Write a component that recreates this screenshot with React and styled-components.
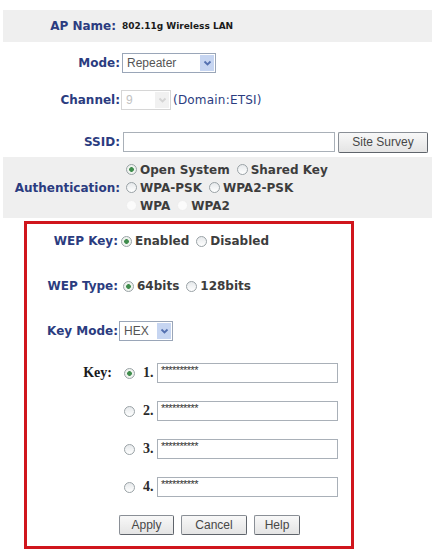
import React from "react";
import styled, { createGlobalStyle } from "styled-components";

const navy = "#2b3c80";

const Global = createGlobalStyle`
  body {
    margin: 0;
    background: #ffffff;
    font-family: "DejaVu Sans", Verdana, sans-serif;
  }
`;

const Page = styled.div`
  width: 432px;
  padding: 10px 0 0 3px;
  box-sizing: border-box;
`;

const Band = styled.div`
  background: #efefef;
  display: flex;
  align-items: center;
  height: ${(p) => p.$h}px;
  margin-top: ${(p) => p.$mt || 0}px;
`;

const Row = styled.div`
  display: flex;
  align-items: center;
  height: ${(p) => p.$h || 26}px;
  margin-top: ${(p) => p.$mt || 0}px;
`;

const Label = styled.div`
  width: ${(p) => p.$w}px;
  flex: none;
  box-sizing: border-box;
  text-align: right;
  padding-right: ${(p) => p.$pr || 0}px;
  color: ${navy};
  font-weight: bold;
  font-size: 12px;
  white-space: nowrap;
`;

const SerifLabel = styled(Label)`
  color: #1a1a1a;
  font-family: "Liberation Serif", "Times New Roman", serif;
  font-size: 14px;
`;

const Value = styled.span`
  font-size: 9px;
  font-weight: bold;
  color: #1a1a1a;
  margin-left: 2px;
`;

const Field = styled.div`
  margin-left: ${(p) => p.$ml || 0}px;
  display: flex;
  align-items: center;
`;

const SelectBox = styled.div`
  width: ${(p) => p.$w}px;
  height: ${(p) => p.$h || 20}px;
  box-sizing: border-box;
  border: 1px solid ${(p) => (p.$disabled ? "#d6d6d6" : "#9aa6b8")};
  background: #fff;
  display: flex;
  align-items: center;
  font-family: "Liberation Sans", Arial, sans-serif;
  font-size: 12px;
  color: ${(p) => (p.$disabled ? "#c2c2c2" : "#555555")};
`;

const SelectText = styled.span`
  flex: 1;
  padding-left: 4px;
`;

const Arrow = styled.span`
  width: 16px;
  height: 100%;
  box-sizing: border-box;
  border: 1px solid #fff;
  background: ${(p) => (p.$disabled ? "#f1f1f1" : "#c6d5f1")};
  display: flex;
  align-items: center;
  justify-content: center;
`;

const Note = styled.span`
  color: ${navy};
  font-size: 12px;
  margin-left: 2px;
  letter-spacing: 0.2px;
`;

const TextInput = styled.div`
  width: ${(p) => p.$w}px;
  height: 20px;
  box-sizing: border-box;
  border: 1px solid #a9b0b8;
  background: #fff;
  margin-left: ${(p) => p.$ml || 0}px;
  font-family: "Liberation Sans", Arial, sans-serif;
  font-size: 11px;
  line-height: 13px;
  padding-left: 3px;
  color: #333;
  letter-spacing: -0.6px;
  overflow: hidden;
`;

const Button = styled.button`
  width: ${(p) => p.$w}px;
  height: ${(p) => p.$h || 20}px;
  margin-left: ${(p) => p.$ml || 0}px;
  padding: 0;
  border: 1px solid #8a8f96;
  border-right-color: #5f646b;
  border-bottom-color: #5f646b;
  border-radius: 2px;
  background: linear-gradient(#f8f8f8, #e4e4e4);
  font-family: "Liberation Sans", Arial, sans-serif;
  font-size: 12px;
  color: #474747;
`;

const Options = styled.div`
  display: flex;
  flex-direction: column;
  margin-left: 3px;
`;

const OptLine = styled.div`
  display: flex;
  align-items: center;
  height: 18px;
`;

const Opt = styled.span`
  display: inline-flex;
  align-items: center;
  font-weight: bold;
  font-size: 12px;
  color: #3d3d3d;
  margin-right: 4px;
  white-space: nowrap;
`;

const Radio = styled.span`
  display: inline-block;
  box-sizing: border-box;
  width: 11px;
  height: 11px;
  border-radius: 50%;
  flex: none;
  margin: 0 3px 0 ${(p) => (p.$ml != null ? p.$ml : 3)}px;
  border: 1px solid ${(p) => (p.$disabled ? "#eeeeee" : "#9aa2a6")};
  background: ${(p) =>
    p.$checked
      ? "radial-gradient(circle, #3f8c4c 0 2px, #eef3ee 2.7px)"
      : p.$disabled
      ? "#fbfbfb"
      : "linear-gradient(#e6e9eb, #ffffff)"};
`;

const Digit = styled.span`
  font-family: "Liberation Serif", "Times New Roman", serif;
  font-weight: bold;
  font-size: 14px;
  color: #2a2a2a;
  margin-left: 5px;
  width: 12px;
`;

const RedBox = styled.div`
  width: 330px;
  margin: 3px 0 0 21px;
  box-sizing: border-box;
  border: 3px solid #d0161d;
  padding: 4px 0 8px 0;
`;

const Chevron = ({ color }) => (
  <svg width="9" height="7" viewBox="0 0 9 7">
    <path d="M1.5 1.5 L4.5 4.5 L7.5 1.5" fill="none" stroke={color} strokeWidth="1.8" />
  </svg>
);

const Select = ({ w, text, disabled }) => (
  <SelectBox $w={w} $disabled={disabled}>
    <SelectText>{text}</SelectText>
    <Arrow $disabled={disabled}>
      <Chevron color={disabled ? "#d4d4d4" : "#5470b0"} />
    </Arrow>
  </SelectBox>
);

const Option = ({ checked, disabled, children, ml }) => (
  <Opt>
    <Radio $checked={checked} $disabled={disabled} $ml={ml} />
    {children}
  </Opt>
);

const stars = "**********";

const KeyRow = ({ n, mt, checked, first }) => (
  <Row $mt={mt}>
    <SerifLabel $w={91} $pr={6}>{first ? "Key:" : ""}</SerifLabel>
    <Radio $checked={checked} $ml={6} />
    <Digit>{n}.</Digit>
    <TextInput $w={181} $ml={2}>{stars}</TextInput>
  </Row>
);

export default function App() {
  return (
    <Page>
      <Global />
      <Band $h={32}>
        <Label $w={117} $pr={4}>AP Name:</Label>
        <Value>802.11g Wireless LAN</Value>
      </Band>

      <Row $mt={8}>
        <Label $w={117}>Mode:</Label>
        <Field $ml={2}>
          <Select w={94} text="Repeater" />
        </Field>
      </Row>

      <Row $mt={11}>
        <Label $w={117}>Channel:</Label>
        <Field $ml={1}>
          <Select w={50} text="9" disabled />
          <Note>(Domain:ETSI)</Note>
        </Field>
      </Row>

      <Row $mt={16}>
        <Label $w={117}>SSID:</Label>
        <TextInput $w={212} $ml={3} />
        <Button $w={90} $h={21} $ml={3}>Site Survey</Button>
      </Row>

      <Band $h={61} $mt={2}>
        <Label $w={117}>Authentication:</Label>
        <Options>
          <OptLine>
            <Option checked>Open System</Option>
            <Option>Shared Key</Option>
          </OptLine>
          <OptLine>
            <Option>WPA-PSK</Option>
            <Option>WPA2-PSK</Option>
          </OptLine>
          <OptLine>
            <Option disabled>WPA</Option>
            <Option disabled>WPA2</Option>
          </OptLine>
        </Options>
      </Band>

      <RedBox>
        <Row>
          <Label $w={91}>WEP Key:</Label>
          <OptLine>
            <Option checked>Enabled</Option>
            <Option>Disabled</Option>
          </OptLine>
        </Row>

        <Row $mt={19}>
          <Label $w={91}>WEP Type:</Label>
          <OptLine>
            <Option checked ml={5}>64bits</Option>
            <Option>128bits</Option>
          </OptLine>
        </Row>

        <Row $mt={19}>
          <Label $w={91}>Key Mode:</Label>
          <Field $ml={1}>
            <Select w={54} text="HEX" />
          </Field>
        </Row>

        <KeyRow n={1} mt={16} checked first />
        <KeyRow n={2} mt={12} />
        <KeyRow n={3} mt={12} />
        <KeyRow n={4} mt={12} />

        <Row $mt={12}>
          <Label $w={91} />
          <Button $w={55} $ml={1}>Apply</Button>
          <Button $w={66} $ml={7}>Cancel</Button>
          <Button $w={46} $ml={7}>Help</Button>
        </Row>
      </RedBox>
    </Page>
  );
}
